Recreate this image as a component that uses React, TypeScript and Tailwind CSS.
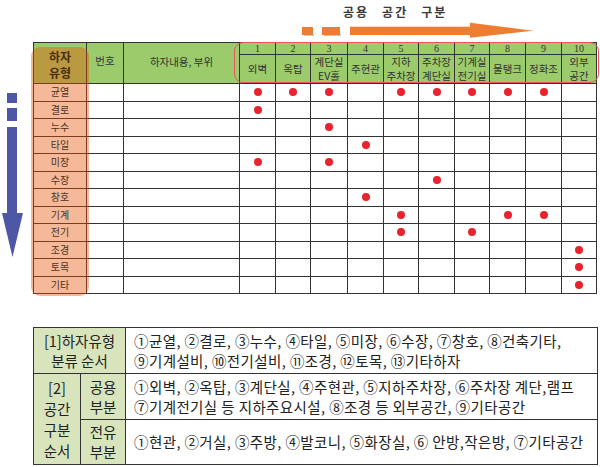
import React from "react";

const spaces = [
  { no: "1", name: ["외벽"] },
  { no: "2", name: ["옥탑"] },
  { no: "3", name: ["계단실", "EV홀"] },
  { no: "4", name: ["주현관"] },
  { no: "5", name: ["지하", "주차장"] },
  { no: "6", name: ["주차장", "계단실"] },
  { no: "7", name: ["기계실", "전기실"] },
  { no: "8", name: ["물탱크"] },
  { no: "9", name: ["정화조"] },
  { no: "10", name: ["외부", "공간"] },
];

const rows: { label: string; dots: number[] }[] = [
  { label: "균열", dots: [1, 2, 3, 5, 6, 7, 8, 9] },
  { label: "결로", dots: [1] },
  { label: "누수", dots: [3] },
  { label: "타일", dots: [4] },
  { label: "미장", dots: [1, 3] },
  { label: "수장", dots: [6] },
  { label: "창호", dots: [4] },
  { label: "기계", dots: [5, 8, 9] },
  { label: "전기", dots: [5, 7] },
  { label: "조경", dots: [10] },
  { label: "토목", dots: [10] },
  { label: "기타", dots: [10] },
];

const line = "border border-[#333]";

export default function App() {
  return (
    <div className="w-[600px] h-[467px] bg-white overflow-hidden font-['Noto_Sans_CJK_KR',sans-serif]">
      {/* title + orange arrow */}
      <div className="h-[42px]">
        <div className="h-[22px] pt-[4px] pl-[343px] flex gap-[13px] text-[12px] leading-[16px] font-bold tracking-[2px] text-[#3a3a3a]">
          <span>공용</span>
          <span>공간</span>
          <span>구분</span>
        </div>
        <svg width="236" height="18" viewBox="0 0 236 18" className="block ml-[300px]">
          <rect x="4" y="12" width="10" height="2" fill="#c8c8c8" />
          <rect x="24" y="12" width="17" height="2" fill="#c8c8c8" />
          <rect x="2" y="5" width="11" height="8" fill="#ed7d31" />
          <rect x="22" y="5" width="18" height="8" fill="#ed7d31" />
          <rect x="50" y="4.7" width="122" height="8.3" fill="#ed7d31" />
          <polygon points="170,0.7 233,8.8 170,15.8" fill="#ed7d31" />
        </svg>
      </div>

      <div className="flex">
        {/* blue arrow */}
        <div className="w-[33px]">
          <svg width="26" height="220" viewBox="0 0 26 220" className="block">
            <rect x="7" y="51" width="10" height="10" fill="#4d57a5" />
            <rect x="7" y="66" width="10" height="13" fill="#4d57a5" />
            <rect x="7" y="85" width="10" height="87" fill="#4d57a5" />
            <polygon points="2,171 23,171 12.5,215" fill="#4d57a5" />
          </svg>
        </div>

        {/* main matrix */}
        <div className="relative">
          <table className="table-fixed border-collapse w-[563px] text-[10px] text-[#333]">
            <colgroup>
              <col className="w-[53px]" />
              <col className="w-[37px]" />
              <col className="w-[116px]" />
              <col className="w-[36px]" />
              <col className="w-[35px]" />
              <col className="w-[37px]" />
              <col className="w-[36px]" />
              <col className="w-[35px]" />
              <col className="w-[36px]" />
              <col className="w-[35px]" />
              <col className="w-[36px]" />
              <col className="w-[36px]" />
              <col className="w-[35px]" />
            </colgroup>
            <thead>
              <tr className="h-[12px]">
                <th
                  rowSpan={2}
                  className={`${line} bg-[#9ccb6c] p-0 text-[12px] leading-[16px] font-bold text-[#4a2c10]`}
                >
                  <div className="relative z-10 pt-[3px]">
                    하자
                    <br />
                    유형
                  </div>
                </th>
                <th rowSpan={2} className={`${line} bg-[#9ccb6c] p-0 font-normal text-[10.5px]`}>
                  <div className="-mt-[4px]">번호</div>
                </th>
                <th rowSpan={2} className={`${line} bg-[#9ccb6c] p-0 font-normal text-[10.5px]`}>
                  <div className="-mt-[2px]">하자내용, 부위</div>
                </th>
                {spaces.map((s) => (
                  <th
                    key={s.no}
                    className={`${line} bg-[#9ccb6c] p-0 font-normal font-['Liberation_Serif',serif] text-[10px] leading-[11px]`}
                  >
                    {s.no}
                  </th>
                ))}
              </tr>
              <tr className="h-[29px]">
                {spaces.map((s) => (
                  <th
                    key={s.no}
                    className={`${line} bg-[#9ccb6c] p-0 font-normal text-[10.5px] leading-[14px] whitespace-nowrap`}
                  >
                    {s.name.map((n) => (
                      <div key={n}>{n}</div>
                    ))}
                  </th>
                ))}
              </tr>
            </thead>
            <tbody>
              {rows.map((r) => (
                <tr key={r.label} className="h-[17.5px]">
                  <td className={`${line} p-0 text-center leading-[16px] text-[#4a3324]`}>
                    <span className="relative z-10">{r.label}</span>
                  </td>
                  <td className={`${line} p-0`} />
                  <td className={`${line} p-0`} />
                  {spaces.map((s, i) => (
                    <td key={s.no} className={`${line} p-0`}>
                      {r.dots.includes(i + 1) && (
                        <div className="flex justify-center items-center">
                          <span className="w-[8px] h-[8px] rounded-full bg-[#e8232b]" />
                        </div>
                      )}
                    </td>
                  ))}
                </tr>
              ))}
            </tbody>
          </table>

          {/* orange highlight over defect-type column */}
          <div className="absolute left-[-2px] top-[5px] w-[58px] h-[249px] rounded-[9px] bg-[rgba(230,80,0,0.4)] pointer-events-none" />
          {/* red outline over space headers */}
          <div className="absolute left-[201px] top-0 w-[365px] h-[41px] rounded-[9px] border-[1.5px] border-[#e2575d] pointer-events-none" />
        </div>
      </div>

      {/* legend table */}
      <div className="mt-[33px] ml-[33px]">
        <table className="table-fixed border-collapse w-[565px] text-[14.5px] leading-[20px] text-[#222]">
          <colgroup>
            <col className="w-[47px]" />
            <col className="w-[45px]" />
            <col />
          </colgroup>
          <tbody>
            <tr className="h-[46px]">
              <td colSpan={2} className={`${line} bg-[#d8e4bc] p-0 text-center`}>
                [1]하자유형
                <br />
                분류 순서
              </td>
              <td className={`${line} px-[8px] py-0 whitespace-nowrap tracking-[0.4px]`}>
                ①균열, ②결로, ③누수, ④타일, ⑤미장, ⑥수장, ⑦창호, ⑧건축기타,
                <br />
                ⑨기계설비, ⑩전기설비, ⑪조경, ⑫토목, ⑬기타하자
              </td>
            </tr>
            <tr className="h-[46px]">
              <td rowSpan={2} className={`${line} bg-[#d8e4bc] p-0 text-center leading-[21px]`}>
                [2]
                <br />
                공간
                <br />
                구분
                <br />
                순서
              </td>
              <td className={`${line} bg-[#d8e4bc] p-0 text-center`}>
                공용
                <br />
                부분
              </td>
              <td className={`${line} px-[8px] py-0 whitespace-nowrap tracking-[0.4px]`}>
                ①외벽, ②옥탑, ③계단실, ④주현관, ⑤지하주차장, ⑥주차장 계단,램프
                <br />
                ⑦기계전기실 등 지하주요시설, ⑧조경 등 외부공간, ⑨기타공간
              </td>
            </tr>
            <tr className="h-[45px]">
              <td className={`${line} bg-[#d8e4bc] p-0 text-center`}>
                전유
                <br />
                부분
              </td>
              <td className={`${line} px-[8px] py-0 whitespace-nowrap tracking-[0.4px]`}>
                ①현관, ②거실, ③주방, ④발코니, ⑤화장실, ⑥ 안방,작은방, ⑦기타공간
              </td>
            </tr>
          </tbody>
        </table>
      </div>
    </div>
  );
}
